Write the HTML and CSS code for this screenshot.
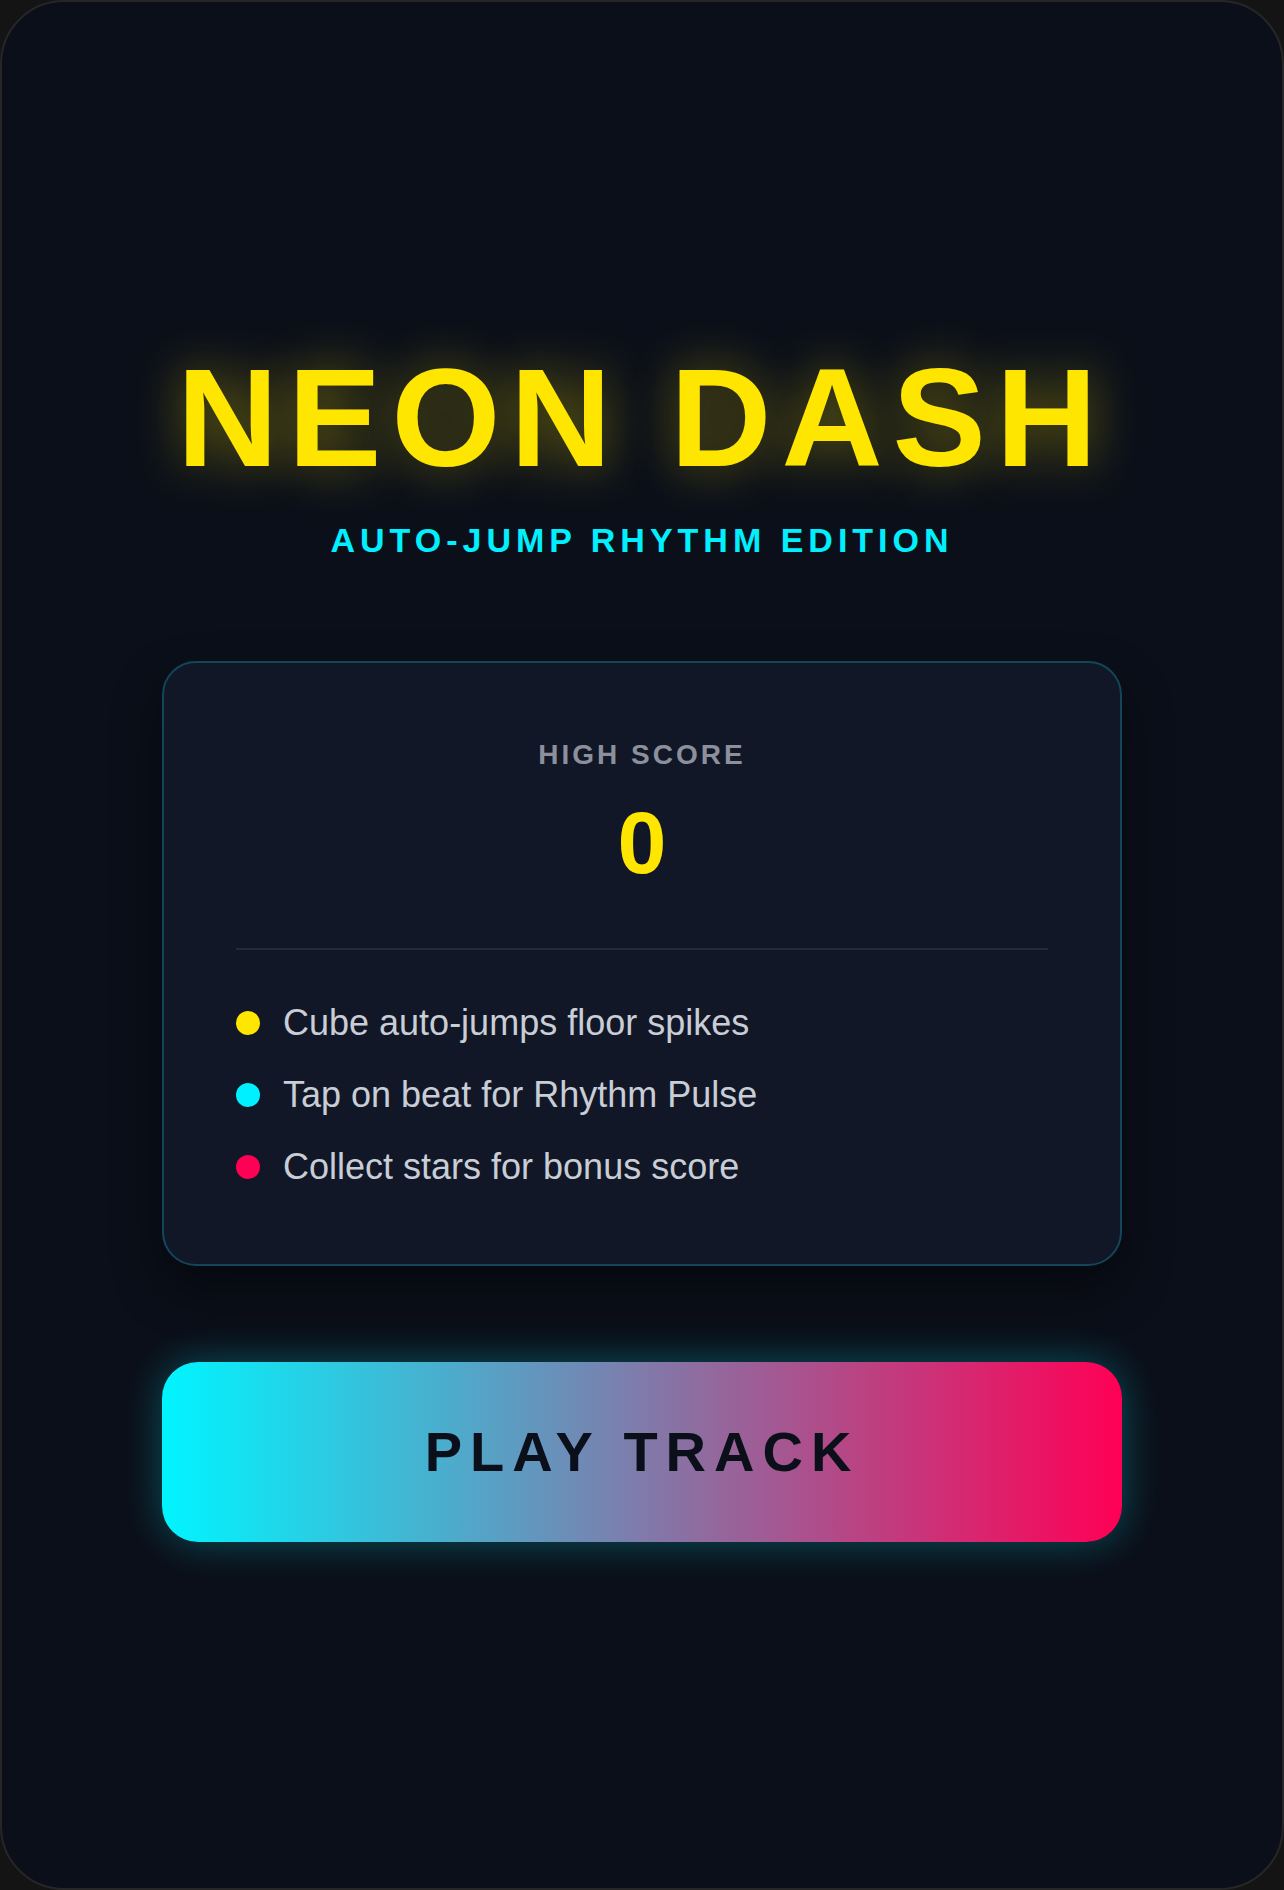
FILE: index.html
```html
<!DOCTYPE html>
<html lang="en">
<head>
    <meta charset="UTF-8">
    <meta name="viewport" content="width=device-width, initial-scale=1.0">
    <title>Neon Dash</title>
    <link rel="stylesheet" href="styles.css">
</head>
<body>
    <!-- Game Frame -->
    <div class="frame">
        <h1 class="title">NEON DASH</h1>
        <p class="subtitle">AUTO-JUMP RHYTHM EDITION</p>

        <!-- Score Card -->
        <div class="card">
            <div class="score-label">HIGH SCORE</div>
            <div id="high-score" class="score">0</div>

            <div class="divider"></div>

            <ul class="tips">
                <li><span class="dot dot-yellow"></span>Cube auto-jumps floor spikes</li>
                <li><span class="dot dot-cyan"></span>Tap on beat for Rhythm Pulse</li>
                <li><span class="dot dot-pink"></span>Collect stars for bonus score</li>
            </ul>
        </div>

        <!-- Play Button -->
        <button class="play-btn">PLAY TRACK</button>
    </div>
</body>
</html>
```

FILE: styles.css
```css
html, body {
    margin: 0;
    padding: 0;
}

body {
    background-color: #141414;
    font-family: "Liberation Sans", Arial, sans-serif;
}

.frame {
    box-sizing: border-box;
    width: 1284px;
    height: 1890px;
    background-color: #0b0f19;
    border: 2px solid #262626;
    border-radius: 64px;
    display: flex;
    flex-direction: column;
    align-items: center;
    justify-content: center;
}

.title {
    margin: 0;
    font-size: 140px;
    line-height: 1;
    font-weight: bold;
    letter-spacing: 10px;
    color: #ffe600;
    text-shadow: 0 0 50px rgba(255, 230, 0, 0.4);
}

.subtitle {
    margin: 35px 0 0;
    font-size: 34px;
    line-height: 1;
    font-weight: bold;
    letter-spacing: 5px;
    color: #00f0ff;
}

.card {
    box-sizing: border-box;
    width: 960px;
    margin-top: 104px;
    padding: 72px 72px 70px;
    background-color: #111726;
    border: 2px solid #12475a;
    border-radius: 34px;
    box-shadow: 0 24px 50px rgba(0, 0, 0, 0.45);
    text-align: center;
}

.score-label {
    font-size: 28px;
    line-height: 1.4;
    font-weight: bold;
    letter-spacing: 3px;
    color: #8b909c;
}

.score {
    margin-top: 16px;
    font-size: 88px;
    line-height: 1.2;
    font-weight: bold;
    color: #ffe600;
}

.divider {
    height: 2px;
    margin: 52px 0 46px;
    background-color: #232a38;
}

.tips {
    list-style: none;
    margin: 0;
    padding: 0;
    display: flex;
    flex-direction: column;
    gap: 18px;
    text-align: left;
}

.tips li {
    display: flex;
    align-items: center;
    gap: 23px;
    font-size: 36px;
    line-height: 1.5;
    color: #c8cdd6;
}

.dot {
    width: 24px;
    height: 24px;
    border-radius: 50%;
    flex-shrink: 0;
}

.dot-yellow { background-color: #ffe600; }
.dot-cyan { background-color: #00f0ff; }
.dot-pink { background-color: #ff0055; }

.play-btn {
    width: 960px;
    height: 180px;
    margin-top: 96px;
    border: none;
    border-radius: 36px;
    background: linear-gradient(90deg, #00f5ff, #ff0055);
    box-shadow: 0 0 40px rgba(0, 240, 255, 0.3);
    font-family: "Liberation Sans", Arial, sans-serif;
    font-size: 56px;
    font-weight: bold;
    letter-spacing: 8px;
    color: #0b0f19;
    cursor: pointer;
}
```
